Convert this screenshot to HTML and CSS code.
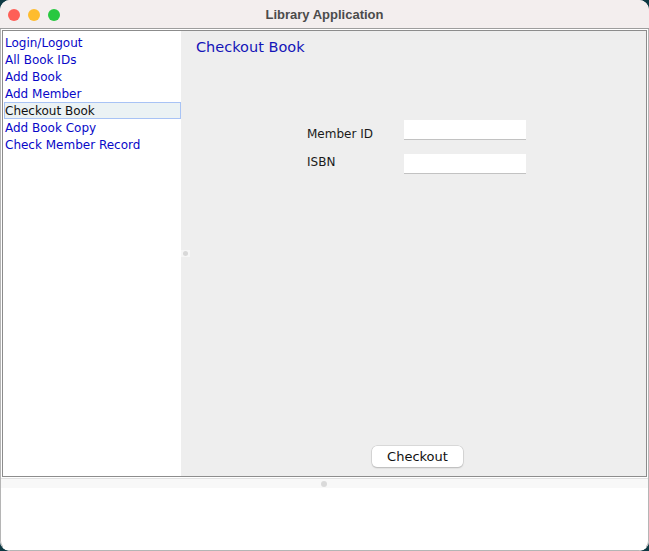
FILE: index.html
```html
<!DOCTYPE html>
<html>
<head>
<meta charset="utf-8">
<link rel="stylesheet" href="styles.css">
</head>
<body>
<div class="window">
  <div class="titlebar">
    <div class="lights">
      <span class="light red"></span>
      <span class="light yellow"></span>
      <span class="light green"></span>
    </div>
    <div class="title">Library Application</div>
  </div>
  <div class="content">
    <div class="split">
      <ul class="menu">
        <li>Login/Logout</li>
        <li>All Book IDs</li>
        <li>Add Book</li>
        <li>Add Member</li>
        <li class="selected">Checkout Book</li>
        <li>Add Book Copy</li>
        <li>Check Member Record</li>
      </ul>
      <div class="divider"><span class="grip"></span></div>
      <div class="panel">
        <h1 class="heading">Checkout Book</h1>
        <div class="form">
          <div class="row">
            <label class="label">Member ID</label>
            <div class="field"></div>
          </div>
          <div class="row">
            <label class="label">ISBN</label>
            <div class="field"></div>
          </div>
        </div>
        <div class="actions">
          <button class="btn">Checkout</button>
        </div>
      </div>
    </div>
    <div class="hsplit"><span class="hgrip"></span></div>
    <div class="bottom"></div>
  </div>
</div>
</body>
</html>
```
FILE: styles.css
```css
html, body {
  margin: 0;
  padding: 0;
  background: #0d3943;
}
.window {
  width: 649px;
  height: 551px;
  border-radius: 10px;
  overflow: hidden;
  background: #ffffff;
  display: flex;
  flex-direction: column;
  box-sizing: border-box;
}
.titlebar {
  height: 29px;
  flex: 0 0 29px;
  background: #f3eeee;
  border-bottom: 1px solid #9d9d9d;
  box-sizing: border-box;
  position: relative;
  display: flex;
  align-items: center;
  justify-content: center;
}
.lights {
  position: absolute;
  left: 8px;
  top: 9px;
  display: flex;
  gap: 8px;
}
.light {
  width: 12px;
  height: 12px;
  border-radius: 50%;
  display: block;
}
.red { background: #fe5f57; }
.yellow { background: #febc2e; }
.green { background: #28c840; }
.title {
  font-family: "Liberation Sans", Arial, sans-serif;
  font-weight: bold;
  font-size: 13px;
  color: #4b4b4b;
  padding-top: 1px;
}
.content {
  flex: 1;
  display: flex;
  flex-direction: column;
  padding: 1px 2px 0 2px;
  background: #ffffff;
  border-left: 1px solid #b5b5b5;
  border-right: 1px solid #b5b5b5;
  border-bottom: 1px solid #b5b5b5;
  border-radius: 0 0 10px 10px;
}
.split {
  height: 447px;
  flex: 0 0 447px;
  border: 1px solid #8c8c8c;
  box-sizing: border-box;
  display: flex;
  margin-left: -1px;
  margin-right: -1px;
}
.menu {
  list-style: none;
  margin: 0;
  padding: 3px 0 0 0;
  width: 178px;
  background: #ffffff;
  font-family: "DejaVu Sans", sans-serif;
  font-size: 12px;
  color: #0808c8;
}
.menu li {
  height: 17px;
  line-height: 17px;
  padding-left: 0;
  box-sizing: border-box;
  border: 1px solid transparent;
  margin-left: 1px;
}
.menu li.selected {
  background: #ebf2f4;
  border-color: #a8c3f5;
  color: #111111;
}
.divider {
  width: 0;
  position: relative;
}
.grip {
  position: absolute;
  left: 0;
  top: 219px;
  width: 9px;
  height: 7px;
  background: #f6f6f6;
}
.grip::after {
  content: "";
  position: absolute;
  left: 2px;
  top: 1px;
  width: 5px;
  height: 5px;
  border-radius: 50%;
  background: #d8d8d8;
}
.panel {
  flex: 1;
  background: #eeeeee;
  display: flex;
  flex-direction: column;
  padding: 0 0 9px 15px;
}
.heading {
  margin: 8px 0 0 0;
  font-family: "DejaVu Sans", sans-serif;
  font-weight: normal;
  font-size: 14.5px;
  color: #1414b8;
}
.form {
  margin: 65px 0 0 111px;
  display: flex;
  flex-direction: column;
  gap: 14px;
}
.row {
  display: flex;
  align-items: center;
  height: 20px;
}
.row + .row .label {
  position: relative;
  top: -6px;
}
.label {
  width: 97px;
  font-family: "DejaVu Sans", sans-serif;
  font-size: 12px;
  color: #1a1a1a;
  padding-top: 7px;
}
.field {
  width: 122px;
  height: 20px;
  background: #ffffff;
  border-bottom: 1px solid #c2c2c2;
  box-sizing: border-box;
}
.actions {
  margin-top: auto;
  display: flex;
  justify-content: center;
  padding-right: 7px;
}
.btn {
  width: 91px;
  height: 21px;
  background: #ffffff;
  border: none;
  border-radius: 5px;
  box-shadow: 0 0 0 0.5px #c4c4c4, 0 1px 1.5px rgba(0,0,0,0.25);
  font-family: "DejaVu Sans", sans-serif;
  font-size: 13px;
  color: #111111;
  padding: 0;
}
.hsplit {
  height: 10px;
  flex: 0 0 10px;
  background: #f8f8f8;
  border-top: 1px solid #e2e2e2;
  box-sizing: border-box;
  margin: 1px -2px 0 -2px;
  position: relative;
}
.hgrip {
  position: absolute;
  left: 320px;
  top: 2px;
  width: 6px;
  height: 6px;
  border-radius: 50%;
  background: #dadada;
}
.bottom {
  flex: 1;
  background: #ffffff;
}
```
